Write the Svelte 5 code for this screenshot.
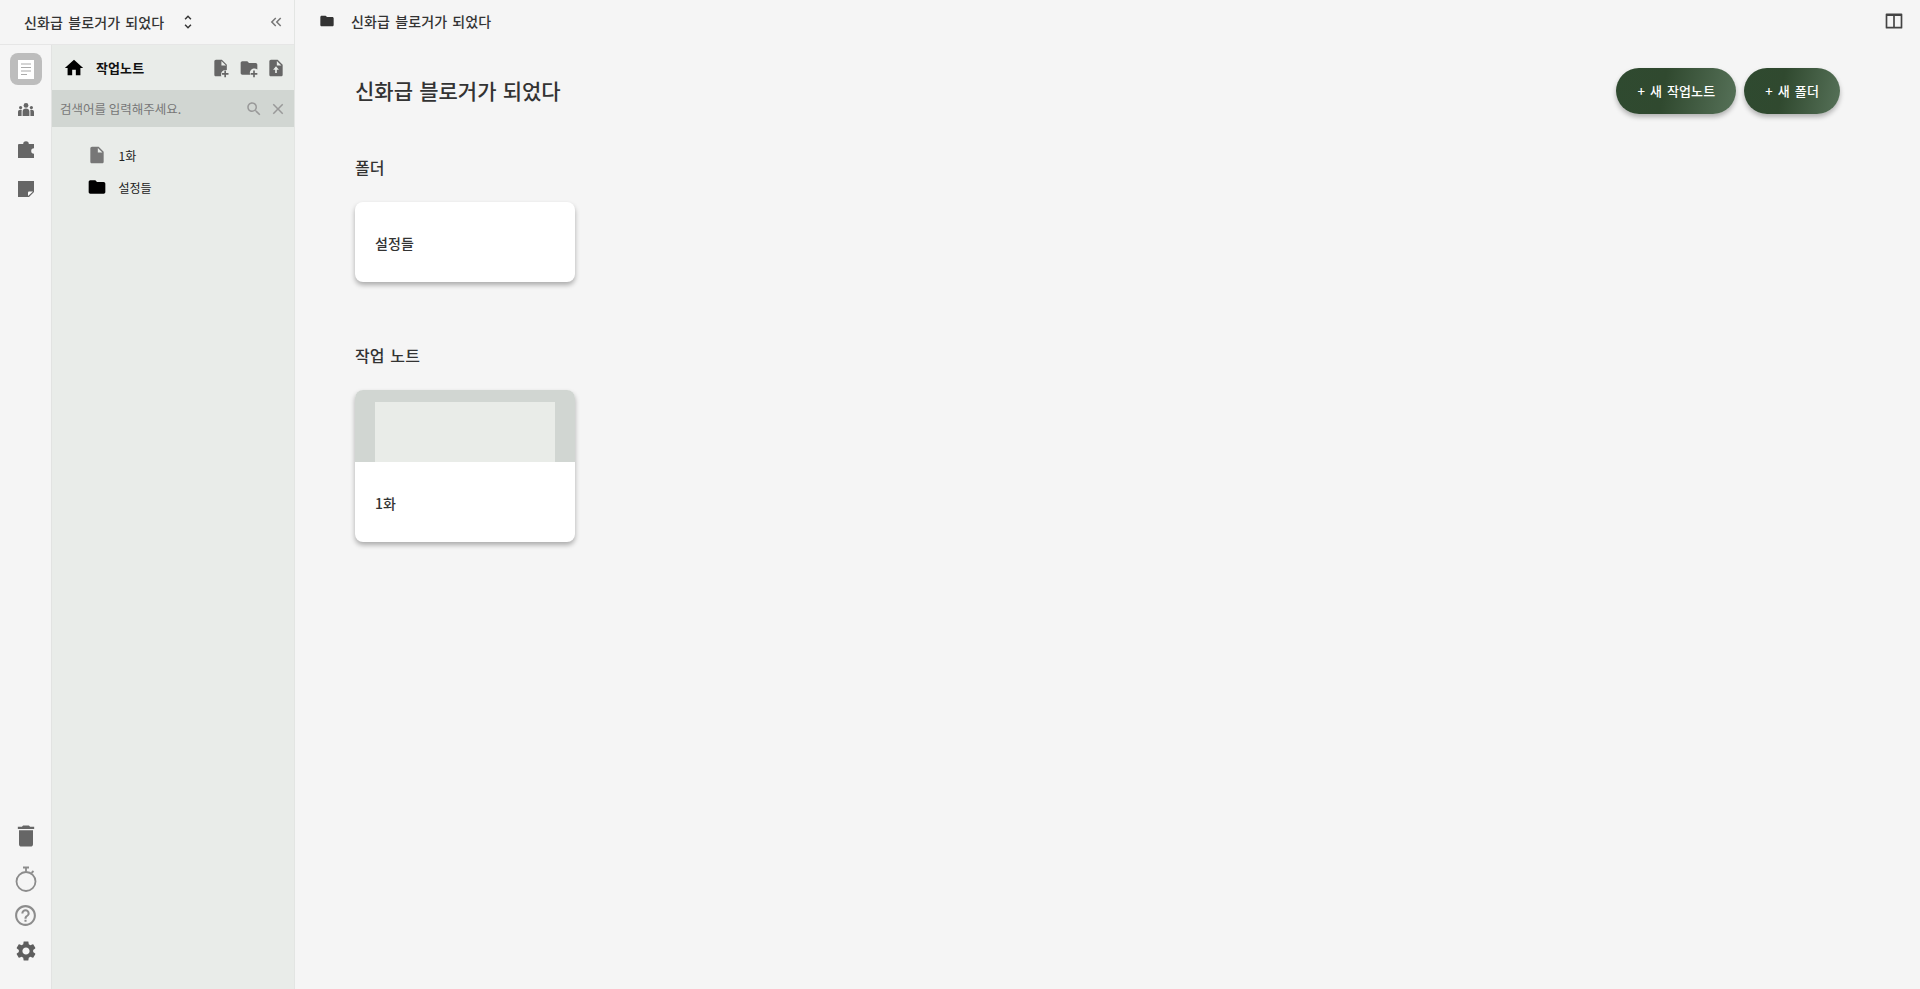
<script>
  const P = {
    home: 'M10 20v-6h4v6h5v-8h3L12 3 2 12h3v8z',
    file: 'M6 2c-1.1 0-1.99.9-1.99 2L4 20c0 1.1.89 2 1.99 2H18c1.1 0 2-.9 2-2V8l-6-6H6zm7 7V3.5L18.5 9H13z',
    folder: 'M10 4H4c-1.1 0-1.99.9-1.99 2L2 18c0 1.1.9 2 2 2h16c1.1 0 2-.9 2-2V8c0-1.1-.9-2-2-2h-8l-2-2z',
    trash: 'M6 19c0 1.1.9 2 2 2h8c1.1 0 2-.9 2-2V7H6v12zM19 4h-3.5l-1-1h-5l-1 1H5v2h14V4z',
    help: 'M11 18h2v-2h-2v2zm1-16C6.48 2 2 6.48 2 12s4.48 10 10 10 10-4.48 10-10S17.52 2 12 2zm0 18c-4.41 0-8-3.59-8-8s3.59-8 8-8 8 3.59 8 8-3.59 8-8 8zm0-14c-2.21 0-4 1.79-4 4h2c0-1.1.9-2 2-2s2 .9 2 2c0 2-3 1.75-3 5h2c0-2.25 3-2.5 3-5 0-2.21-1.79-4-4-4z',
    gear: 'M19.14 12.94c.04-.3.06-.61.06-.94 0-.32-.02-.64-.07-.94l2.03-1.58c.18-.14.23-.41.12-.61l-1.92-3.32c-.12-.22-.37-.29-.59-.22l-2.39.96c-.5-.38-1.03-.7-1.62-.94l-.36-2.54c-.04-.24-.24-.41-.48-.41h-3.84c-.24 0-.43.17-.47.41l-.36 2.54c-.59.24-1.13.57-1.62.94l-2.39-.96c-.22-.08-.47 0-.59.22L2.74 8.87c-.12.21-.08.47.12.61l2.03 1.58c-.05.3-.09.63-.09.94s.02.64.07.94l-2.03 1.58c-.18.14-.23.41-.12.61l1.92 3.32c.12.22.37.29.59.22l2.39-.96c.5.38 1.03.7 1.62.94l.36 2.54c.05.24.24.41.48.41h3.84c.24 0 .44-.17.47-.41l.36-2.54c.59-.24 1.13-.56 1.62-.94l2.39.96c.22.08.47 0 .59-.22l1.92-3.32c.12-.22.07-.47-.12-.61l-2.01-1.58zM12 15.6c-1.98 0-3.6-1.62-3.6-3.6s1.62-3.6 3.6-3.6 3.6 1.62 3.6 3.6-1.62 3.6-3.6 3.6z',
    search: 'M15.5 14h-.79l-.28-.27C15.41 12.59 16 11.11 16 9.5 16 5.91 13.09 3 9.5 3S3 5.91 3 9.5 5.91 16 9.5 16c1.61 0 3.09-.59 4.23-1.57l.27.28v.79l5 4.99L20.49 19l-4.99-5zm-6 0C7.01 14 5 11.99 5 9.5S7.01 5 9.5 5 14 7.01 14 9.5 11.99 14 9.5 14z',
    close: 'M19 6.41 17.59 5 12 10.59 6.41 5 5 6.41 10.59 12 5 17.59 6.41 19 12 13.41 17.59 19 19 17.59 13.41 12z',
    unfold: 'M12 5.83 15.17 9l1.41-1.41L12 3 7.41 7.59 8.83 9 12 5.83zm0 12.34L8.83 15l-1.41 1.41L12 21l4.59-4.59L15.17 15 12 18.17z',
    dleft: 'M17.59 18 19 16.59 14.42 12 19 7.41 17.59 6l-6 6zM11 18l1.41-1.41L7.83 12l4.58-4.59L11 6l-6 6z',
    addfile: 'M13 2H6c-1.1 0-2 .9-2 2v16c0 1.1.9 2 2 2h6.5c-.3-.6-.5-1.3-.5-2 0-3 2.5-5.5 5.5-5.5.5 0 1 .1 1.5.2V8l-6-6zm-.5 7V3.5L18 9h-5.5zM18 15v3h3v2h-3v3h-2v-3h-3v-2h3v-3h2z',
    addfolder: 'M20 6h-8l-2-2H4c-1.1 0-2 .9-2 2v12c0 1.1.9 2 2 2h9.5c-.3-.6-.5-1.3-.5-2 0-3 2.5-5.5 5.5-5.5 1.3 0 2.5.5 3.5 1.2V8c0-1.1-.9-2-2-2zm-1 9v3h3v2h-3v3h-2v-3h-3v-2h3v-3h2z',
    upfile: 'M14 2H6c-1.1 0-1.99.9-1.99 2L4 20c0 1.1.89 2 1.99 2H18c1.1 0 2-.9 2-2V8l-6-6zm-1 12v4h-2v-4H8.5l3.5-4 3.5 4H13zm0-5V3.5L18.5 9H13z',
    columns: 'M3 3h18a1 1 0 0 1 1 1v16a1 1 0 0 1-1 1H3a1 1 0 0 1-1-1V4a1 1 0 0 1 1-1zm1 3v13h7V6H4zm9 0v13h7V6h-7z'
  };
</script>

{#snippet icon(name, size, color)}
  <svg class="ic" width={size} height={size} viewBox="0 0 24 24" fill={color}><path d={P[name]} /></svg>
{/snippet}

<div class="page">
  <aside class="side">
    <header class="side-head">
      <span class="book">신화급 블로거가 되었다</span>
      <span class="unfold">{@render icon('unfold', 18, '#333')}</span>
      <span class="collapse">{@render icon('dleft', 18, '#777')}</span>
    </header>
    <div class="side-body">
      <nav class="rail">
        <div class="rail-top">
          <button class="active">
            <svg width="16" height="19" viewBox="0 0 16 19">
              <rect width="16" height="19" fill="#fff" />
              <path d="M3 4h10M3 7.5h10M3 11h10M3 14.5h6" stroke="#aaa" stroke-width="1.2" />
            </svg>
          </button>
          <button class="groups">
            <svg width="16" height="13" viewBox="0 0 16 13" fill="#666">
              <circle cx="8" cy="2.4" r="2.4" />
              <circle cx="2.6" cy="4.6" r="1.6" />
              <circle cx="13.4" cy="4.6" r="1.6" />
              <path d="M4.6 13V8.6C4.6 6.8 6 5.6 8 5.6s3.4 1.2 3.4 3V13zM0 13V9c0-1.3 1-2.2 2.6-2.2.5 0 1 .1 1.2.2-.2.5-.2 1-.2 1.6V13zM16 13V9c0-1.3-1-2.2-2.6-2.2-.5 0-1 .1-1.2.2.2.5.2 1 .2 1.6V13z" />
            </svg>
          </button>
          <button>
            <svg width="16" height="18" viewBox="0 0 16 18" fill="#666">
              <path d="M1 4h4.2a2.8 2.8 0 0 1 5.6 0H16v4.2a2.8 2.8 0 0 0 0 5.6V18H0V5a1 1 0 0 1 1-1z" />
            </svg>
          </button>
          <button>
            <svg width="16" height="16" viewBox="0 0 16 16">
              <path d="M0 0h16v11l-5 5H0z" fill="#666" />
              <path d="M10 15v-3.5a1 1 0 0 1 1-1h4z" fill="#fff" />
            </svg>
          </button>
        </div>
        <div class="rail-bottom">
          <button class="b-trash">{@render icon('trash', 28, '#666')}</button>
          <button class="b-timer">
            <svg width="26" height="28" viewBox="0 0 26 28" fill="none" stroke="#8c8c8c" stroke-width="1.8">
              <circle cx="13" cy="16.5" r="9.5" />
              <path d="M10 2.5h6M13 2.5v4M20.5 6l-2 2" />
            </svg>
          </button>
          <button class="b-help">{@render icon('help', 25, '#8c8c8c')}</button>
          <button class="b-gear">{@render icon('gear', 24, '#5e5e5e')}</button>
        </div>
      </nav>
      <div class="panel">
        <div class="panel-head">
          <span class="home">{@render icon('home', 22, '#000')}</span>
          <span class="panel-title">작업노트</span>
          <span class="panel-tools">
            {@render icon('addfile', 20, '#666')}
            {@render icon('addfolder', 20, '#666')}
            {@render icon('upfile', 20, '#666')}
          </span>
        </div>
        <div class="search">
          <span class="ph">검색어를 입력해주세요.</span>
          {@render icon('search', 18, '#999')}
          {@render icon('close', 18, '#999')}
        </div>
        <ul class="tree">
          <li>{@render icon('file', 20, '#777')}<span>1화</span></li>
          <li>{@render icon('folder', 20, '#000')}<span>설정들</span></li>
        </ul>
      </div>
    </div>
  </aside>
  <main class="main">
    <div class="crumb">
      <span class="crumb-left">{@render icon('folder', 16, '#333')}<span>신화급 블로거가 되었다</span></span>
      {@render icon('columns', 20, '#444')}
    </div>
    <div class="content">
      <div class="title-row">
        <h1>신화급 블로거가 되었다</h1>
        <div class="actions">
          <button class="cta">+ 새 작업노트</button>
          <button class="cta">+ 새 폴더</button>
        </div>
      </div>
      <h2 class="h-folder">폴더</h2>
      <div class="card"><div class="card-label">설정들</div></div>
      <h2 class="h-note">작업 노트</h2>
      <div class="card note-card">
        <div class="thumb"><div class="sheet"></div></div>
        <div class="card-label">1화</div>
      </div>
    </div>
  </main>
</div>

<style>
  :global(body) { margin: 0; background: #f5f5f5; }
  .page { display: flex; height: 989px; overflow: hidden; font-family: "Noto Sans CJK KR", "Noto Sans", sans-serif; color: #333; background: #f5f5f5; word-spacing: 2px; letter-spacing: .1px; }
  .ic { display: block; flex: none; }
  button { border: 0; background: none; padding: 0; margin: 0; font: inherit; letter-spacing: inherit; word-spacing: inherit; display: flex; align-items: center; justify-content: center; }

  .side { width: 294px; flex: none; display: flex; flex-direction: column; border-right: 1px solid #e3e5e3; }
  .side-head { height: 44px; flex: none; display: flex; align-items: center; padding-left: 24px; border-bottom: 1px solid #e6e6e6; font-size: 14px; font-weight: 500; }
  .book { width: 155px; color: #333; }
  .unfold { display: block; }
  .collapse { margin-left: auto; margin-right: 9px; display: block; }
  .side-body { flex: 1; display: flex; min-height: 0; }
  .rail { width: 52px; flex: none; display: flex; flex-direction: column; justify-content: space-between; border-right: 1px solid #e2e3e2; padding-bottom: 18px; box-sizing: border-box; }
  .rail-top { display: flex; flex-direction: column; align-items: center; padding-top: 8px; }
  .rail-top button { width: 32px; height: 40px; }
  .rail-top button.active { width: 32px; height: 32px; background: #bdbdbd; border-radius: 8px; margin-bottom: 4px; }
  .rail-bottom { display: flex; flex-direction: column; align-items: center; }
  .b-trash { height: 36px; margin-bottom: 5px; }
  .b-timer { height: 40px; }
  .b-help { height: 32px; }
  .b-gear { height: 40px; }

  .panel { width: 242px; flex: none; background: #e9ece9; }
  .panel-head { height: 45px; display: flex; align-items: center; padding-left: 11px; }
  .panel-title { font-size: 13px; font-weight: 700; color: #111; margin-left: 11px; }
  .panel-tools { margin-left: auto; display: flex; gap: 7.5px; margin-right: 8px; }
  .search { height: 37px; background: #d1d6d2; display: flex; align-items: center; padding: 0 7px 0 8px; gap: 6px; }
  .ph { flex: 1; font-size: 12.5px; color: #777; letter-spacing: 0; word-spacing: 0; }
  .tree { list-style: none; margin: 12px 0 0; padding: 0 0 0 35px; }
  .tree li { height: 32px; display: flex; align-items: center; gap: 11.5px; font-size: 12px; letter-spacing: 0; color: #222; }

  .main { flex: 1; min-width: 0; }
  .crumb { height: 42px; display: flex; align-items: center; justify-content: space-between; padding: 0 16px 0 24px; font-size: 14px; font-weight: 500; color: #333; }
  .crumb-left { display: flex; align-items: center; gap: 16px; }
  .content { padding: 0 80px 0 60px; }
  .title-row { display: flex; justify-content: space-between; align-items: center; height: 46px; margin-top: 26px; }
  h1 { margin: 0 0 3px; font-size: 21px; font-weight: 500; letter-spacing: 0; word-spacing: 1.5px; color: #333; }
  .actions { display: flex; gap: 8px; }
  .cta { height: 46px; padding: 0 21px 1px; box-sizing: border-box; border-radius: 23px; font-size: 13px; font-weight: 500; color: #fff; background: linear-gradient(100deg, #2f4a30, #30492f 40%, #567158); box-shadow: 0 3px 5px rgba(0,0,0,.28); }
  h2 { margin: 0; font-size: 16px; font-weight: 500; color: #333; }
  .h-folder { margin-top: 41px; line-height: 24px; }
  .h-note { margin-top: 61px; line-height: 24px; }
  .card { width: 220px; margin-top: 23px; background: #fff; border-radius: 8px; box-shadow: 0 3px 5px rgba(0,0,0,.3); overflow: hidden; }
  .note-card { margin-top: 23px; }
  .card-label { height: 79px; padding-top: 1px; display: flex; align-items: center; padding-left: 20px; font-size: 14px; font-weight: 500; color: #333; }
  .thumb { height: 72px; background: #d1d6d2; padding: 12px 20px 0; box-sizing: border-box; }
  .sheet { height: 100%; background: #e9ece8; }
</style>
